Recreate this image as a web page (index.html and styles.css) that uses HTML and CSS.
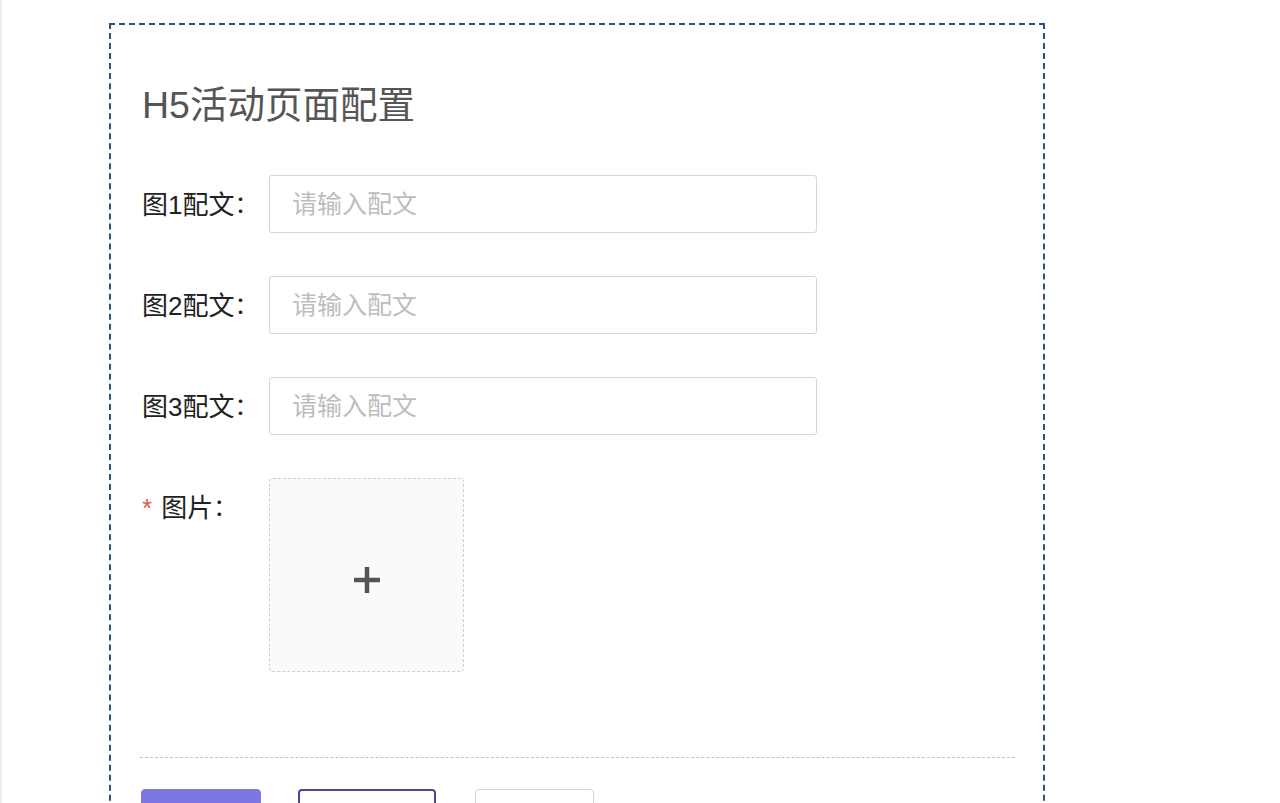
FILE: index.html
```html
<!DOCTYPE html>
<html lang="zh-CN">
<head>
<meta charset="utf-8">
<title>H5活动页面配置</title>
<link rel="stylesheet" href="styles.css">
</head>
<body>
<div class="page">
  <div class="panel">
    <h1 class="title">H5活动页面配置</h1>
    <form class="form">
      <div class="row">
        <label class="label">图1配文<span class="colon" lang="zh-TW">：</span></label>
        <input class="input" type="text" placeholder="请输入配文">
      </div>
      <div class="row">
        <label class="label">图2配文<span class="colon" lang="zh-TW">：</span></label>
        <input class="input" type="text" placeholder="请输入配文">
      </div>
      <div class="row">
        <label class="label">图3配文<span class="colon" lang="zh-TW">：</span></label>
        <input class="input" type="text" placeholder="请输入配文">
      </div>
      <div class="row">
        <label class="label"><span class="req">*</span>图片<span class="colon" lang="zh-TW">：</span></label>
        <div class="upload">
          <svg class="plus" width="28" height="28" viewBox="0 0 28 28"><path d="M14 1v26M1 14h26" stroke="#555" stroke-width="4.5" fill="none"/></svg>
        </div>
      </div>
    </form>
    <div class="divider"></div>
    <div class="actions">
      <button class="btn btn-primary" type="button" aria-label="保存"></button>
      <button class="btn btn-outline" type="button" aria-label="预览"></button>
      <button class="btn btn-default" type="button" aria-label="取消"></button>
    </div>
  </div>
</div>
</body>
</html>
```

FILE: styles.css
```css
html, body {
  margin: 0;
  padding: 0;
  background: #fff;
}
body {
  font-family: "Liberation Sans", "Noto Sans CJK SC", sans-serif;
  color: #333;
}
.page {
  border-left: 2px solid #ececec;
  padding: 23px 0 0 107px;
  min-height: 900px;
}
.panel {
  box-sizing: border-box;
  width: 936px;
  border: 2px dashed #2f5276;
  padding: 55px 28px 40px 29px;
}
.title {
  margin: 0;
  padding-left: 2px;
  font-size: 37.5px;
  line-height: 50px;
  font-weight: normal;
  color: #555;
}
.form {
  margin-top: 45px;
  display: flex;
  flex-direction: column;
  gap: 43px;
}
.row {
  display: flex;
  align-items: flex-start;
}
.label {
  width: 129px;
  flex: none;
  height: 58px;
  line-height: 58px;
  font-family: "Liberation Sans", "Noto Sans CJK SC", sans-serif;
  font-size: 26px;
  color: #222;
  padding-left: 2px;
  box-sizing: border-box;
  white-space: nowrap;
}
.colon {
  font-family: "Noto Sans CJK TC", sans-serif;
  font-feature-settings: "halt";
  font-size: 24px;
}
.req {
  color: #e4584f;
  margin-right: 9px;
  font-size: 26px;
}
.input {
  box-sizing: border-box;
  width: 548px;
  height: 58px;
  border: 1px solid #d6d6d6;
  border-radius: 3px;
  padding: 0 22px;
  font-family: "Liberation Sans", "Noto Sans CJK SC", sans-serif;
  font-size: 25px;
  color: #333;
  outline: none;
  background: #fff;
}
.input::placeholder {
  color: #bdbdbd;
}
.upload {
  box-sizing: border-box;
  width: 195px;
  height: 194px;
  border: 1px dashed #cfcfcf;
  border-radius: 4px;
  background: #fafafa;
  display: flex;
  align-items: center;
  justify-content: center;
}
.plus {
  margin-top: 10px;
}
.divider {
  margin-top: 85px;
  border-top: 1px dashed #c2c2c2;
}
.actions {
  margin-top: 31px;
  padding-left: 1px;
  display: flex;
  gap: 37px;
}
.btn {
  box-sizing: border-box;
  height: 60px;
  border-radius: 4px;
  padding: 0;
  background: #fff;
}
.btn-primary {
  width: 120px;
  background: #7e76e2;
  border: 1px solid #7e76e2;
}
.btn-outline {
  width: 138px;
  border: 2px solid #4c4790;
}
.btn-default {
  width: 119px;
  margin-left: 2px;
  border: 1px solid #d4d4d4;
}
```
